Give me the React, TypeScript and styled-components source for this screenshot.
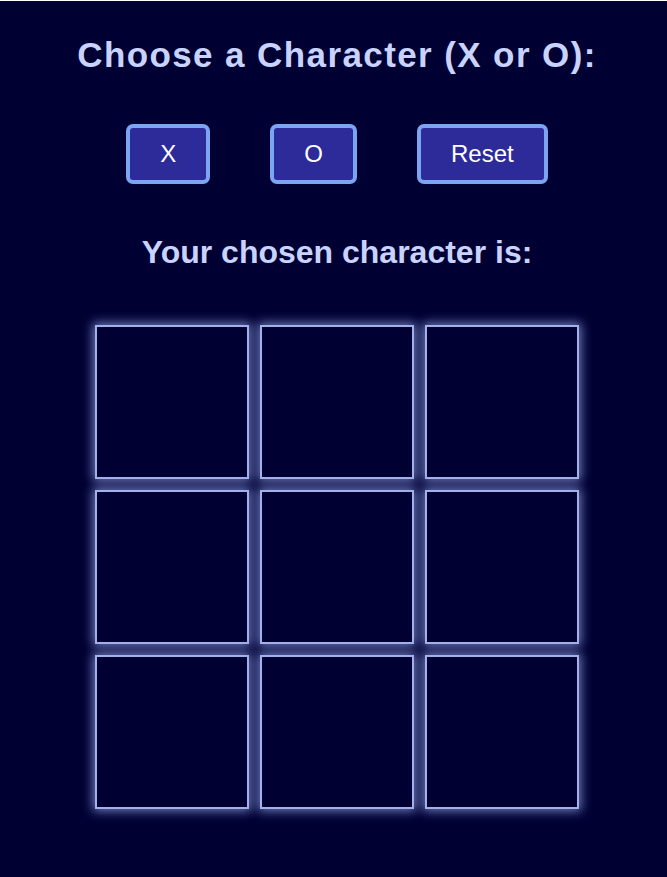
import React, { useState } from "react";
import styled, { createGlobalStyle } from "styled-components";

const GlobalStyle = createGlobalStyle`
  html, body {
    margin: 0;
    padding: 0;
    background: #ffffff;
  }
`;

const Wrapper = styled.div`
  min-height: 100vh;
  box-sizing: border-box;
  border-top: 1px solid #ffffff;
  background: #000033;
  padding: 34px 0 40px 7px;
  display: flex;
  flex-direction: column;
  align-items: center;
  font-family: "Liberation Sans", Arial, sans-serif;
`;

const Title = styled.h1`
  margin: 0 0 49px;
  font-size: 35px;
  font-weight: bold;
  letter-spacing: 1.4px;
  color: #c9d3ff;
  text-align: center;
`;

const ButtonRow = styled.div`
  display: flex;
  gap: 60px;
  margin-bottom: 50px;
`;

const Button = styled.button`
  font-family: "Liberation Sans", Arial, sans-serif;
  font-size: 24px;
  color: #ffffff;
  background: #2d2a9a;
  border: 4px solid #7ba4f2;
  border-radius: 7px;
  padding: 12px 30px;
  cursor: pointer;
`;

const Subtitle = styled.h2`
  margin: 0 0 54px;
  font-size: 32px;
  font-weight: bold;
  color: #c9d3ff;
  text-align: center;
`;

const Board = styled.div`
  display: grid;
  grid-template-columns: repeat(3, 154px);
  grid-auto-rows: 154px;
  gap: 11px;
`;

const Cell = styled.div`
  box-sizing: border-box;
  border: 2px solid #a3b1ea;
  background: #000033;
  box-shadow: 0 0 10px 2px rgba(140, 158, 225, 0.8);
  display: flex;
  align-items: center;
  justify-content: center;
  font-size: 80px;
  font-weight: bold;
  color: #c9d3ff;
  cursor: pointer;
`;

export default function App() {
  const [player, setPlayer] = useState<string>("");
  const [cells, setCells] = useState<string[]>(Array(9).fill(""));

  const play = (i: number) => {
    if (!player || cells[i]) return;
    const next = cells.slice();
    next[i] = player;
    setCells(next);
  };

  return (
    <>
      <GlobalStyle />
      <Wrapper>
        <Title>Choose a Character (X or O):</Title>
        <ButtonRow>
          <Button onClick={() => setPlayer("X")}>X</Button>
          <Button onClick={() => setPlayer("O")}>O</Button>
          <Button
            onClick={() => {
              setPlayer("");
              setCells(Array(9).fill(""));
            }}
          >
            Reset
          </Button>
        </ButtonRow>
        <Subtitle>Your chosen character is: {player}</Subtitle>
        <Board>
          {cells.map((c, i) => (
            <Cell key={i} onClick={() => play(i)}>
              {c}
            </Cell>
          ))}
        </Board>
      </Wrapper>
    </>
  );
}
